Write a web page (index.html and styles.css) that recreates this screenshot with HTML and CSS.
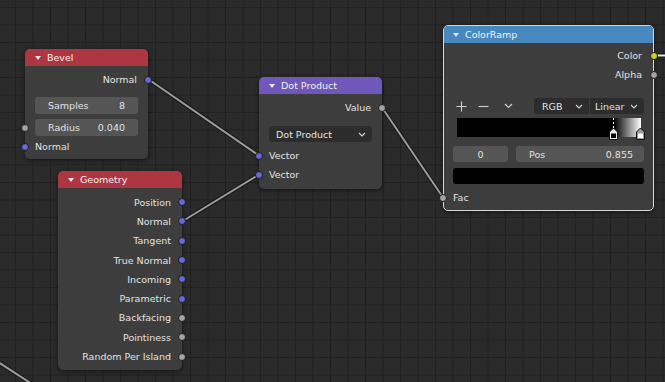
FILE: index.html
```html
<!DOCTYPE html>
<html lang="en">
<head>
    <meta charset="UTF-8">
    <title>Node Editor</title>
    <link rel="stylesheet" href="styles.css">
</head>
<body>
<div class="editor">
    <!-- links between sockets -->
    <svg class="links" width="665" height="382" viewBox="0 0 665 382">
        <g class="wire-shadow">
            <line x1="148" y1="79" x2="259" y2="155.5"/>
            <line x1="182" y1="221.5" x2="259" y2="174.5"/>
            <line x1="382" y1="107.5" x2="443" y2="197.5"/>
            <line x1="654" y1="55.5" x2="670" y2="55.5"/>
            <line x1="-5" y1="360" x2="32" y2="384"/>
        </g>
        <g class="wire">
            <line x1="148" y1="79" x2="259" y2="155.5"/>
            <line x1="182" y1="221.5" x2="259" y2="174.5"/>
            <line x1="382" y1="107.5" x2="443" y2="197.5"/>
            <line class="light" x1="654" y1="55.5" x2="670" y2="55.5"/>
            <line x1="-5" y1="360" x2="32" y2="384"/>
        </g>
    </svg>

    <!-- Bevel -->
    <div class="node bevel">
        <div class="head red"><span class="tri"></span>Bevel</div>
        <div class="body">
            <div class="row out">Normal<i class="sock vec"></i></div>
            <div class="prop first"><div class="field"><span>Samples</span><span>8</span></div></div>
            <div class="prop"><i class="sock val"></i><div class="field"><span>Radius</span><span>0.040</span></div></div>
            <div class="row in last-in"><i class="sock vec"></i>Normal</div>
        </div>
    </div>

    <!-- Geometry -->
    <div class="node geometry">
        <div class="head red"><span class="tri"></span>Geometry</div>
        <div class="body">
            <div class="row out tall">Position<i class="sock vec"></i></div>
            <div class="row out tall">Normal<i class="sock vec"></i></div>
            <div class="row out tall">Tangent<i class="sock vec"></i></div>
            <div class="row out tall">True Normal<i class="sock vec"></i></div>
            <div class="row out tall">Incoming<i class="sock vec"></i></div>
            <div class="row out tall">Parametric<i class="sock vec"></i></div>
            <div class="row out tall">Backfacing<i class="sock val"></i></div>
            <div class="row out tall">Pointiness<i class="sock val"></i></div>
            <div class="row out tall">Random Per Island<i class="sock val"></i></div>
        </div>
    </div>

    <!-- Dot Product -->
    <div class="node dot">
        <div class="head purple"><span class="tri"></span>Dot Product</div>
        <div class="body">
            <div class="row out">Value<i class="sock val"></i></div>
            <div class="select wide">
                <span>Dot Product</span>
                <svg class="chev" width="8" height="5" viewBox="0 0 8 5"><polyline points="1,1 4,4 7,1"/></svg>
            </div>
            <div class="row in vec-first"><i class="sock vec"></i>Vector</div>
            <div class="row in"><i class="sock vec"></i>Vector</div>
        </div>
    </div>

    <!-- ColorRamp -->
    <div class="node ramp">
        <div class="head blue"><span class="tri"></span>ColorRamp</div>
        <div class="body">
            <div class="row out">Color<i class="sock col"></i></div>
            <div class="row out">Alpha<i class="sock val"></i></div>
            <div class="tools">
                <svg class="icon" width="11" height="11" viewBox="0 0 11 11"><path d="M5.5 0.5v10M0.5 5.5h10"/></svg>
                <svg class="icon" width="11" height="11" viewBox="0 0 11 11"><path d="M0.5 5.5h10"/></svg>
                <svg class="icon chev-btn" width="9" height="6" viewBox="0 0 9 6"><polyline points="1,1 4.5,4.5 8,1"/></svg>
                <div class="select-pair">
                    <div class="select rgb"><span>RGB</span><svg class="chev" width="8" height="5" viewBox="0 0 8 5"><polyline points="1,1 4,4 7,1"/></svg></div>
                    <div class="select linear"><span>Linear</span><svg class="chev" width="8" height="5" viewBox="0 0 8 5"><polyline points="1,1 4,4 7,1"/></svg></div>
                </div>
            </div>
            <div class="bar">
                <svg class="stops" width="192" height="24" viewBox="0 0 192 24">
                    <line class="dash" x1="156.5" y1="0" x2="156.5" y2="10"/>
                    <path class="stop-a" d="M152.5 14 L156.5 10 L160.5 14 L160.5 21.5 L152.5 21.5 Z"/>
                    <rect x="154" y="15.5" width="5" height="4.5" fill="#000"/>
                    <path class="stop-b" d="M179.5 14 L183.5 10 L187.5 14 L187.5 21.5 L179.5 21.5 Z"/>
                    <rect x="181" y="15.5" width="5" height="4.5" fill="#fff"/>
                </svg>
            </div>
            <div class="fields">
                <div class="field index"><span>0</span></div>
                <div class="field pos"><span>Pos</span><span>0.855</span></div>
            </div>
            <div class="swatch"></div>
            <div class="row in"><i class="sock val"></i>Fac</div>
        </div>
    </div>
</div>
</body>
</html>
```

FILE: styles.css
```css
* {
    box-sizing: border-box;
}
body {
    margin: 0;
    background: #2a2a2a;
    font-family: "DejaVu Sans", "Liberation Sans", sans-serif;
    font-size: 9.5px;
    color: #e2e2e2;
}
.editor {
    position: relative;
    width: 665px;
    height: 382px;
    overflow: hidden;
    background-color: #2a2a2a;
    background-image:
        linear-gradient(to right, #202020 1px, transparent 1px),
        linear-gradient(to bottom, #202020 1px, transparent 1px);
    background-size: 17.5px 17.5px;
    background-position: 15px 7px;
}

/* wires */
.links {
    position: absolute;
    left: 0;
    top: 0;
}
.wire-shadow line {
    stroke: rgba(0, 0, 0, 0.45);
    stroke-width: 4;
    stroke-linecap: round;
}
.wire line {
    stroke: #9c9c9c;
    stroke-width: 2;
    stroke-linecap: round;
}
.wire .light {
    stroke: #e8e8e8;
}

/* node frame */
.node {
    position: absolute;
    background: #3d3d3d;
    border-radius: 5px;
    box-shadow: 0 1px 4px rgba(0, 0, 0, 0.55);
}
.head {
    height: 17px;
    display: flex;
    align-items: center;
    padding-left: 10px;
    border-radius: 5px 5px 0 0;
    color: #f0f0f0;
}
.tri {
    width: 0;
    height: 0;
    border-left: 3px solid transparent;
    border-right: 3px solid transparent;
    border-top: 4px solid #e6e6e6;
    margin-right: 6px;
}
.red {
    background: #ae3642;
}
.purple {
    background: #6f58ba;
}
.blue {
    background: #4789bf;
}
.body {
    display: flex;
    flex-direction: column;
    padding: 4px 0 3px;
}

/* sockets rows */
.row {
    position: relative;
    height: 19px;
    display: flex;
    align-items: center;
}
.row.tall {
    height: 19.3px;
}
.out {
    justify-content: flex-end;
    padding-right: 11px;
}
.in {
    padding-left: 10px;
}
.sock {
    position: absolute;
    top: 50%;
    width: 8px;
    height: 8px;
    margin-top: -4px;
    border-radius: 50%;
    border: 1px solid #1c1c1c;
}
.out .sock {
    right: -4px;
}
.in .sock,
.prop .sock {
    left: -4px;
}
.vec {
    background: #6868d6;
}
.val {
    background: #a3a3a3;
}
.col {
    background: #cfcf2a;
}

/* value fields */
.prop {
    position: relative;
    padding: 0 10px;
    margin-top: 5px;
}
.prop.first {
    margin-top: 8px;
}
.field {
    height: 17px;
    display: flex;
    align-items: center;
    justify-content: space-between;
    padding: 0 13px;
    background: #555555;
    border-radius: 3px;
}
.last-in {
    margin-top: 1px;
}

/* dropdowns */
.select {
    height: 16px;
    display: flex;
    align-items: center;
    justify-content: space-between;
    background: #2c2c2c;
    border-radius: 3px;
    padding: 0 6px 0 7px;
}
.chev polyline,
.chev-btn polyline {
    fill: none;
    stroke: #cfcfcf;
    stroke-width: 1.2;
}
.select.wide {
    margin: 9px 10px 0;
}
.vec-first {
    margin-top: 4px;
}

/* color ramp */
.bevel {
    left: 25px;
    top: 49px;
    width: 123px;
    height: 110px;
}
.geometry {
    left: 58px;
    top: 171px;
    width: 124px;
    height: 199px;
}
.geometry .body {
    padding-top: 4.5px;
}
.dot {
    left: 259px;
    top: 77px;
    width: 123px;
    height: 112px;
}
.ramp {
    left: 443px;
    top: 25px;
    width: 211px;
    height: 186px;
    border: 1px solid #d8d8d8;
}
.ramp .head {
    border-radius: 4px 4px 0 0;
    height: 17px;
    padding-left: 9px;
}
.ramp .body {
    padding-top: 3px;
}
.ramp .out .sock {
    right: -5px;
}
.ramp .in .sock {
    left: -5px;
}
.tools {
    display: flex;
    align-items: center;
    height: 16px;
    margin-top: 14px;
    padding: 0 9px 0 12px;
}
.icon path {
    stroke: #d0d0d0;
    stroke-width: 1.1;
    fill: none;
}
.icon {
    margin-right: 11px;
}
.chev-btn {
    margin-left: 4px;
}
.select-pair {
    display: flex;
    margin-left: auto;
}
.select-pair .select.rgb {
    width: 55px;
    border-radius: 3px 0 0 3px;
    padding-left: 8px;
}
.select-pair .select.linear {
    width: 55px;
    border-radius: 0 3px 3px 0;
    border-left: 1px solid #3a3a3a;
    padding-left: 5px;
}
.bar {
    position: relative;
    height: 19px;
    margin: 4px 12px 0 13px;
    background: linear-gradient(to right, #000 85.5%, #fff 100%);
}
.stops {
    position: absolute;
    left: 0;
    top: 0;
}
.dash {
    stroke: #fff;
    stroke-width: 1;
    stroke-dasharray: 2 2;
}
.stop-a {
    fill: #e8e8e8;
    stroke: #111;
    stroke-width: 1;
}
.stop-b {
    fill: #9a9a9a;
    stroke: #111;
    stroke-width: 1;
}
.fields {
    display: flex;
    gap: 8px;
    margin: 9px 9px 0;
}
.fields .field {
    height: 16px;
}
.field.index {
    width: 55px;
    justify-content: center;
}
.field.pos {
    flex: 1;
    padding: 0 11px 0 13px;
}
.swatch {
    height: 16px;
    margin: 6px 9px 0;
    background: #000;
    border-radius: 3px;
}
.ramp .in {
    margin-top: 4px;
    padding-left: 9px;
}
```
